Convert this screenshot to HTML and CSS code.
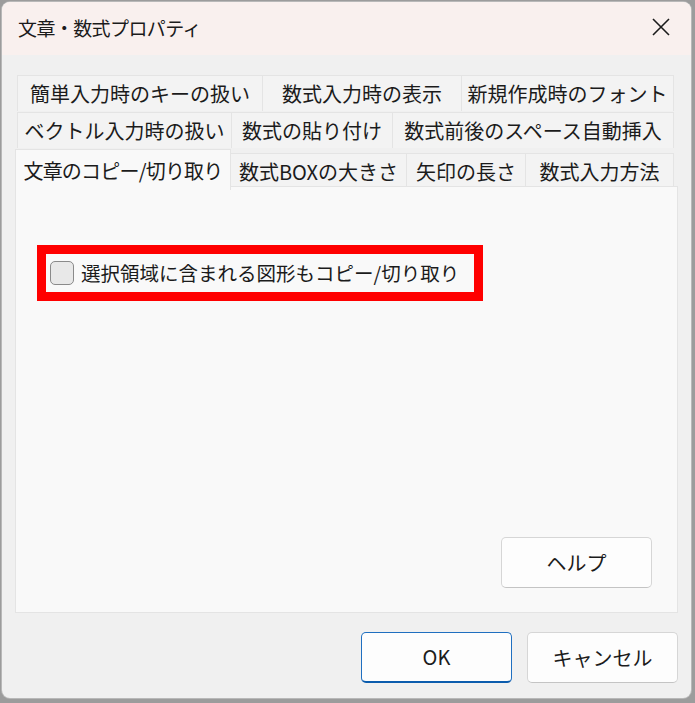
FILE: index.html
```html
<!DOCTYPE html>
<html lang="ja">
<head>
<meta charset="utf-8">
<title>文章・数式プロパティ</title>
<link rel="stylesheet" href="styles.css">
</head>
<body>
<div class="window">
  <div class="titlebar">
    <span class="title">文章・数式プロパティ</span>
    <svg class="close" width="20" height="20" viewBox="0 0 20 20"><path d="M2 2 L18 18 M18 2 L2 18" stroke="#1b1b1b" stroke-width="1.6" fill="none"/></svg>
  </div>
  <div class="content">
    <div class="tabs">
      <div class="row row1">
        <div class="tab">簡単入力時のキーの扱い</div>
        <div class="tab">数式入力時の表示</div>
        <div class="tab">新規作成時のフォント</div>
      </div>
      <div class="row row2">
        <div class="tab">ベクトル入力時の扱い</div>
        <div class="tab">数式の貼り付け</div>
        <div class="tab">数式前後のスペース自動挿入</div>
      </div>
      <div class="row row3">
        <div class="tab selected">文章のコピー/切り取り</div>
        <div class="tab">数式BOXの大きさ</div>
        <div class="tab">矢印の長さ</div>
        <div class="tab">数式入力方法</div>
      </div>
    </div>
    <div class="panel">
      <div class="highlight">
        <label class="check"><span class="box"></span><span class="label">選択領域に含まれる図形もコピー/切り取り</span></label>
      </div>
      <button class="btn help">ヘルプ</button>
    </div>
    <div class="actions">
      <button class="btn ok">OK</button>
      <button class="btn">キャンセル</button>
    </div>
  </div>
</div>
</body>
</html>
```

FILE: styles.css
```css
* { box-sizing: border-box; }
html, body { margin: 0; padding: 0; }
body {
  width: 695px;
  height: 703px;
  background: #9c9c9c;
  font-family: "Noto Sans CJK JP", "Noto Sans", sans-serif;
  color: #1b1b1b;
  padding: 2px 4px 5px 2px;
}
.window {
  width: 689px;
  height: 696px;
  background: #f0f0f0;
  border-radius: 8px;
  overflow: hidden;
  display: flex;
  flex-direction: column;
  box-shadow: 0 0 0 1px #b8b8b8;
}
.titlebar {
  height: 53px;
  background: #f9f0ee;
  display: flex;
  align-items: center;
  justify-content: space-between;
  padding: 0 20px 0 16px;
  flex-shrink: 0;
}
.title {
  font-size: 19px;
  line-height: 1;
  margin-top: -2px;
  letter-spacing: -0.6px;
}
.close { display: block; margin-top: -3px; }
.content {
  padding: 20px 13px 0 13px;
  display: flex;
  flex-direction: column;
}
.tabs {
  display: flex;
  flex-direction: column;
}
.row {
  display: grid;
  height: 37px;
}
.row1 { grid-template-columns: 246px 199px 212px; margin-left: 2px; }
.row2 { grid-template-columns: 215px 161px 281px; margin-left: 2px; }
.row3 { grid-template-columns: 216px 176px 119px 148px; align-items: end; }
.tab {
  height: 36px;
  border: 1px solid #e4e4e4;
  border-bottom: none;
  background: #f3f3f3;
  font-size: 20px;
  line-height: 1;
  display: flex;
  align-items: center;
  justify-content: center;
  white-space: nowrap;
  margin-left: -1px;
}
.row .tab:first-child { margin-left: 0; }
.row3 .tab { height: 36px; }
.tab.selected {
  height: 41px;
  margin-bottom: -1px;
  background: #f9f9f9;
  position: relative;
  z-index: 1;
  padding-top: 1px;
  letter-spacing: -0.8px;
}
.panel {
  height: 427px;
  background: #f9f9f9;
  border: 1px solid #e4e4e4;
  display: flex;
  flex-direction: column;
  align-items: flex-start;
  padding: 58px 25px 24px 21px;
}
.highlight {
  width: 446px;
  height: 56px;
  border: 9px solid #ff0000;
  background: #f9f9f9;
  display: flex;
  align-items: center;
  padding-left: 4px;
}
.check {
  display: flex;
  align-items: center;
  gap: 7px;
}
.box {
  width: 24px;
  height: 24px;
  border: 1.5px solid #8a8a8a;
  border-radius: 5px;
  background: #e8e8e8;
  margin-top: -1px;
}
.label {
  font-size: 19.5px;
  line-height: 1;
  white-space: nowrap;
}
.btn {
  font-family: "Noto Sans CJK JP", "Noto Sans", sans-serif;
  font-size: 20px;
  line-height: 1;
  color: #1b1b1b;
  background: #fdfdfd;
  border: 1px solid #d6d6d6;
  border-bottom-color: #c4c4c4;
  border-radius: 5px;
  width: 151px;
  height: 51px;
  padding: 0;
}
.help {
  margin-top: auto;
  align-self: flex-end;
}
.actions {
  display: flex;
  justify-content: flex-end;
  gap: 15px;
  margin-top: 19px;
  padding-right: 0;
}
.ok {
  border: 1px solid #1f6fc0;
  border-bottom: 2px solid #0b5cad;
}
```
